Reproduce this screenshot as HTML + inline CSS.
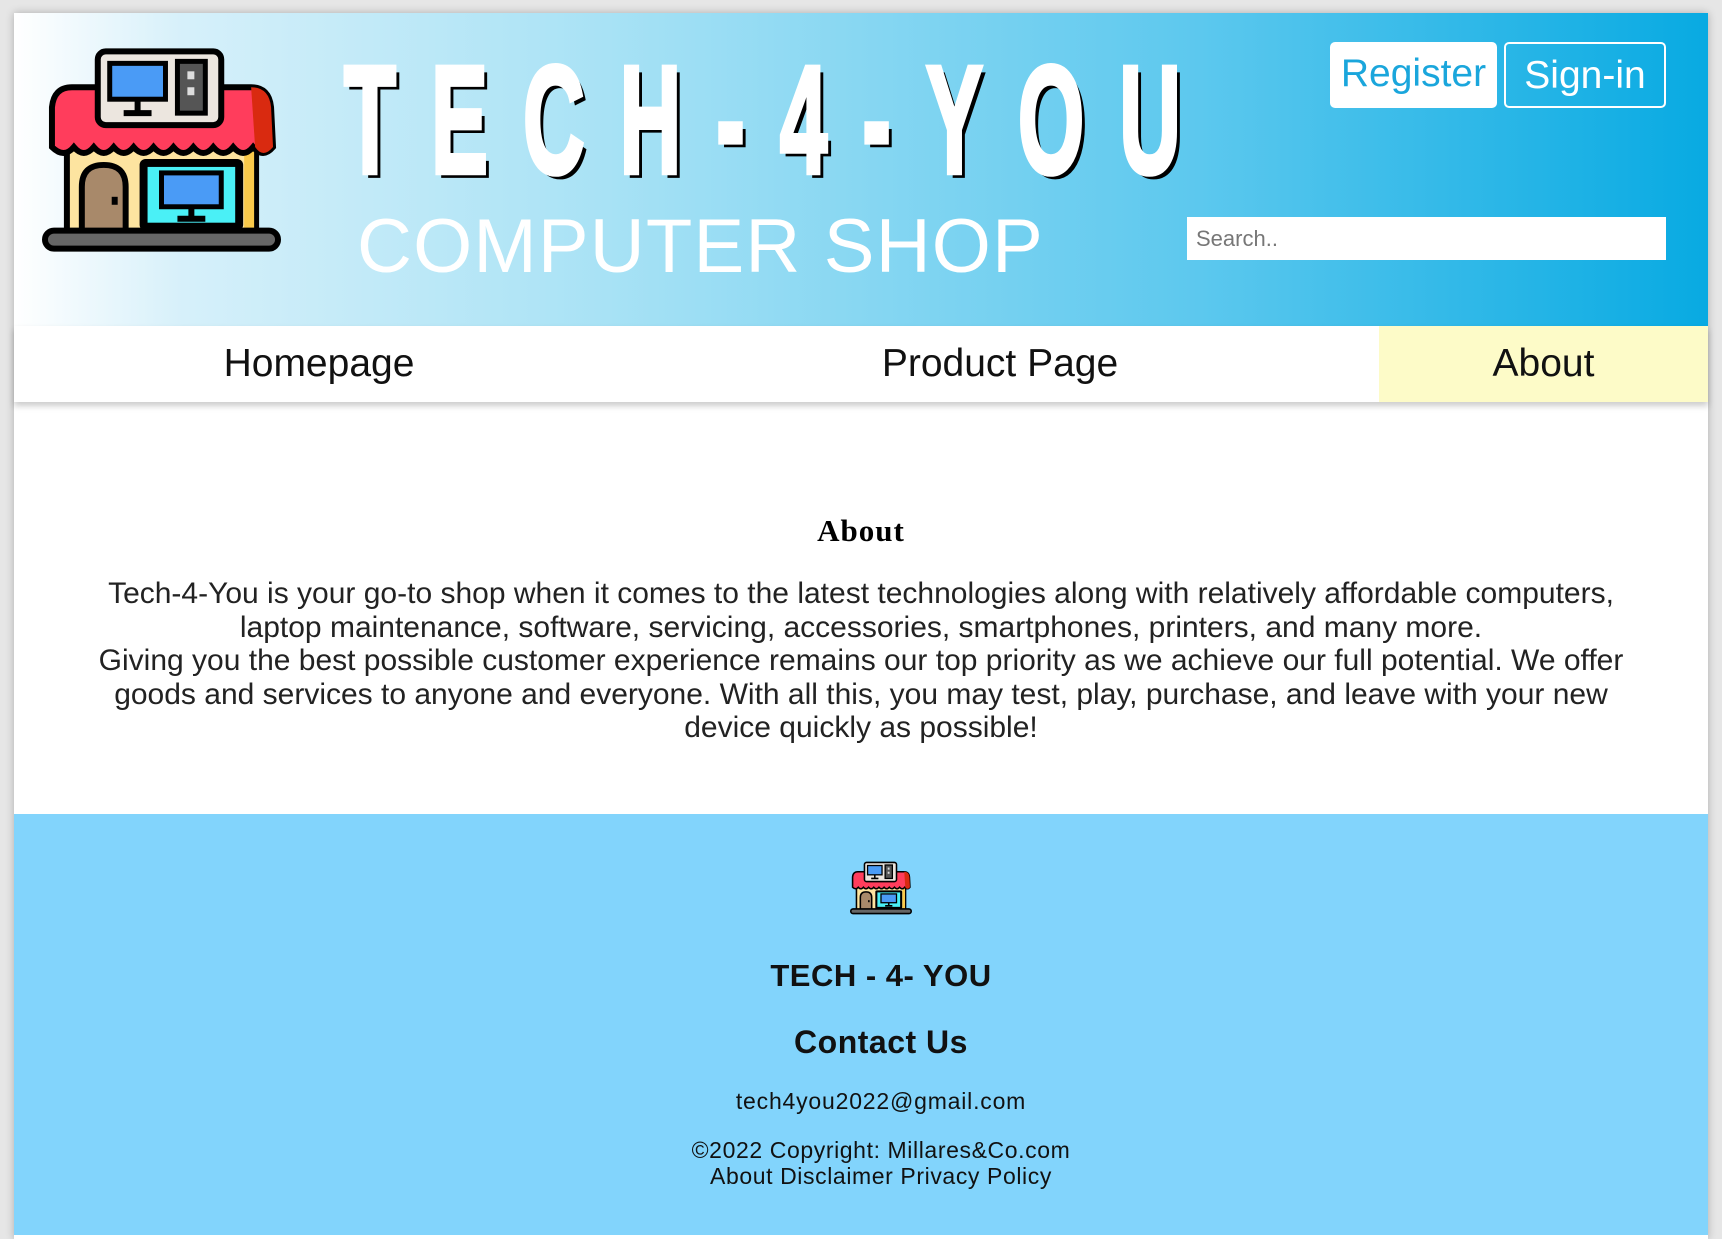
<!DOCTYPE html>
<html><head><meta charset="utf-8">
<style>
*{margin:0;padding:0;box-sizing:border-box}
body{width:1722px;height:1239px;background:#e6e6e6;position:relative;overflow:hidden;font-family:"Liberation Sans",sans-serif}
#card{position:absolute;left:14px;top:13px;width:1694px;height:1226px;background:#fff;box-shadow:0 0 8px rgba(0,0,0,.25)}
#hdr{position:absolute;left:0;top:0;width:1694px;height:313px;background:linear-gradient(90deg,#fff 0%,#d6f0fa 10%,#a8e2f5 35%,#5cc8ee 70%,#08aae2 100%)}
.abs{position:absolute}
#title{left:330px;top:31px;font-weight:bold;font-size:118px;letter-spacing:49px;color:#fff;-webkit-text-stroke:4px #fff;text-shadow:6px 4px 0 #000;transform:scale(0.72,1.3);transform-origin:top left;white-space:nowrap;line-height:1}
#sub{left:343px;top:196px;font-size:76px;letter-spacing:1.2px;color:#fff;white-space:nowrap;line-height:1}
.btn{top:29px;height:66px;border-radius:5px;font-size:39px;line-height:64px;text-align:center}
#reg{left:1316px;width:167px;background:#fff;color:#1aa6dc}
#sig{left:1490px;width:162px;border:2px solid #fff;color:#fff}
#search{left:1173px;top:204px;width:479px;height:43px;background:#fff;color:#777;font-size:22px;line-height:43px;padding-left:9px}
#nav{position:absolute;left:0;top:313px;width:1694px;height:76px;background:#fff;box-shadow:0 4px 6px rgba(0,0,0,.2)}
#nav div{position:absolute;top:0;height:76px;line-height:76px;font-size:39px;text-align:center;color:#111}
h2{position:absolute;top:500px;left:0;width:1694px;text-align:center;font-family:"Liberation Serif",serif;font-size:31px;font-weight:bold;letter-spacing:1px}
#para{position:absolute;left:0;width:1694px;top:564px;text-align:center;font-size:30px;line-height:33.6px;color:#222}
#para div{white-space:nowrap}
#foot{position:absolute;left:0;top:801px;width:1694px;height:421px;background:#82d4fc;text-align:center;color:#111}
.fl{position:absolute;left:20px;width:1694px}
</style></head><body>
<svg width="0" height="0" style="position:absolute">
<defs>
<symbol id="shop" viewBox="0 0 240 206">
<rect x="25" y="92" width="190" height="98" fill="#fde4a0" stroke="#000" stroke-width="6"/>
<rect x="203" y="95" width="10" height="90" fill="#f9c94a"/>
<path d="M10 60 Q12 40 30 40 L210 40 Q228 40 230 60 L232 100 Q222 112 212 100 Q202 112 192 100 Q182 112 172 100 Q162 112 152 100 Q142 112 132 100 Q122 112 112 100 Q102 112 92 100 Q82 112 72 100 Q62 112 52 100 Q42 112 32 100 Q22 112 10 100 Z" fill="#ff3d5c" stroke="#000" stroke-width="6"/>
<path d="M210 40 Q228 40 230 60 L232 100 Q222 112 214 100 Z" fill="#d92a10"/>
<rect x="56" y="4" width="124" height="74" rx="8" fill="#ece6df" stroke="#000" stroke-width="6"/>
<rect x="68" y="16" width="56" height="36" fill="#4a9bf6" stroke="#000" stroke-width="5"/>
<path d="M96 52 V64 M82 66 H110" stroke="#000" stroke-width="6"/>
<rect x="136" y="14" width="28" height="52" fill="#555" stroke="#000" stroke-width="5"/>
<rect x="146" y="24" width="7" height="8" fill="#ddd"/><rect x="146" y="40" width="7" height="8" fill="#ddd"/>
<path d="M40 190 V140 Q40 118 62 118 Q84 118 84 140 V190 Z" fill="#a8896a" stroke="#000" stroke-width="6"/>
<rect x="70" y="150" width="6" height="8" fill="#000"/>
<rect x="98" y="112" width="104" height="72" rx="6" fill="#000"/>
<rect x="106" y="120" width="88" height="56" fill="#4af0f6"/>
<rect x="120" y="126" width="60" height="34" fill="#4a9bf6" stroke="#000" stroke-width="5"/>
<path d="M150 160 V170 M136 172 H164" stroke="#000" stroke-width="6"/>
<rect x="3" y="184" width="234" height="18" rx="9" fill="#666" stroke="#000" stroke-width="6"/>
</symbol>
</defs></svg>
<div id="card">
 <div id="hdr">
  <svg class="abs" style="left:28px;top:34px" width="239" height="206"><use href="#shop"/></svg>
  <div id="title" class="abs">TECH-4-YOU</div>
  <div id="sub" class="abs">COMPUTER SHOP</div>
  <div id="reg" class="abs btn">Register</div>
  <div id="sig" class="abs btn">Sign-in</div>
  <div id="search" class="abs">Search..</div>
 </div>
 <div id="nav">
  <div style="left:0;width:610px">Homepage</div>
  <div style="left:690px;width:592px">Product Page</div>
  <div style="left:1365px;width:329px;background:#fdfbc8">About</div>
 </div>
 <h2>About</h2>
 <div id="para">
  <div>Tech-4-You is your go-to shop when it comes to the latest technologies along with relatively affordable computers,</div>
  <div>laptop maintenance, software, servicing, accessories, smartphones, printers, and many more.</div>
  <div>Giving you the best possible customer experience remains our top priority as we achieve our full potential. We offer</div>
  <div>goods and services to anyone and everyone. With all this, you may test, play, purchase, and leave with your new</div>
  <div>device quickly as possible!</div>
 </div>
 <div id="foot">
  <svg class="abs" style="left:836px;top:42px" width="62" height="64"><use href="#shop"/></svg>
  <div class="fl" style="top:144px;font-size:31px;font-weight:bold;letter-spacing:.5px">TECH - 4- YOU</div>
  <div class="fl" style="top:210px;font-size:32px;font-weight:bold;letter-spacing:.5px">Contact Us</div>
  <div class="fl" style="top:274px;font-size:23px;letter-spacing:.8px">tech4you2022@gmail.com</div>
  <div class="fl" style="top:323px;font-size:23px;line-height:26px;letter-spacing:.6px">©2022 Copyright: Millares&amp;Co.com<br>About Disclaimer Privacy Policy</div>
 </div>
</div>
</body></html>
